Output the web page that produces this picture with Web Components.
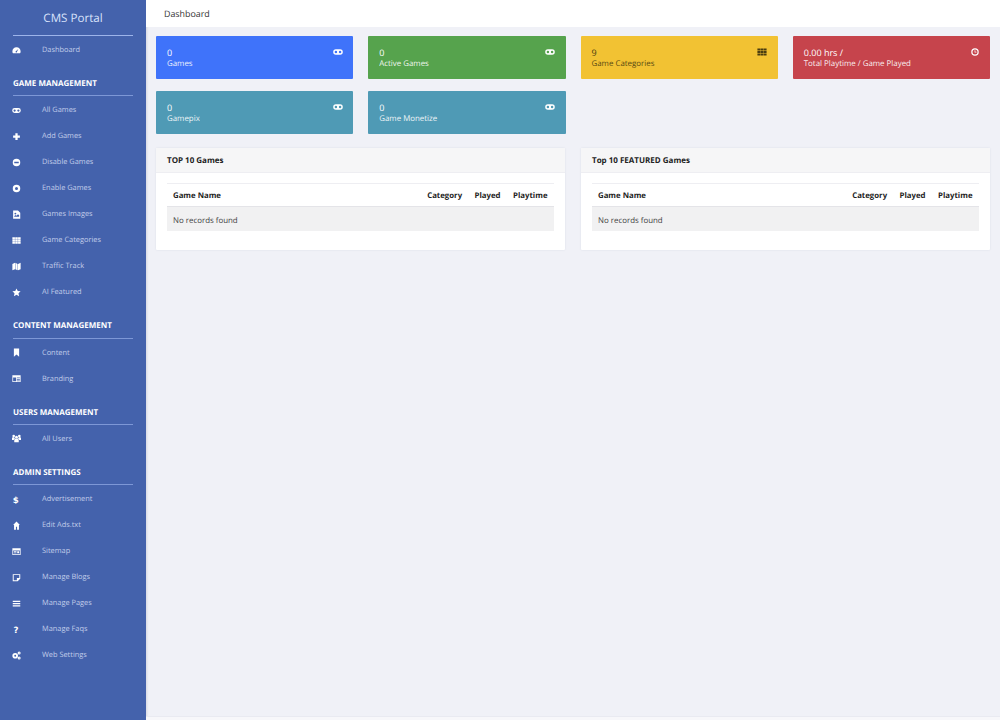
<!DOCTYPE html>
<html>
<head>
<meta charset="utf-8">
<title>CMS Portal</title>
<style>
  html, body { margin: 0; height: 100%; }
  body { font-family: "Open Sans", "Liberation Sans", sans-serif; background: #f0f1f7; text-rendering: geometricPrecision; }
  app-shell { height: 720px; }
</style>
</head>
<body>
<app-shell>
  <side-bar slot="side" brand="CMS Portal">
    <nav-item icon="dash" label="Dashboard"></nav-item>
    <nav-head label="GAME MANAGEMENT"></nav-head>
    <nav-item icon="game" label="All Games"></nav-item>
    <nav-item icon="plus" label="Add Games"></nav-item>
    <nav-item icon="minus" label="Disable Games"></nav-item>
    <nav-item icon="dot" label="Enable Games"></nav-item>
    <nav-item icon="image" label="Games Images"></nav-item>
    <nav-item icon="grid" label="Game Categories"></nav-item>
    <nav-item icon="map" label="Traffic Track"></nav-item>
    <nav-item icon="star" label="AI Featured"></nav-item>
    <nav-head label="CONTENT MANAGEMENT"></nav-head>
    <nav-item icon="bookmark" label="Content"></nav-item>
    <nav-item icon="card" label="Branding"></nav-item>
    <nav-head label="USERS MANAGEMENT"></nav-head>
    <nav-item icon="users" label="All Users"></nav-item>
    <nav-head label="ADMIN SETTINGS"></nav-head>
    <nav-item icon="dollar" label="Advertisement"></nav-item>
    <nav-item icon="home" label="Edit Ads.txt"></nav-item>
    <nav-item icon="window" label="Sitemap"></nav-item>
    <nav-item icon="note" label="Manage Blogs"></nav-item>
    <nav-item icon="bars" label="Manage Pages"></nav-item>
    <nav-item icon="question" label="Manage Faqs"></nav-item>
    <nav-item icon="cogs" label="Web Settings"></nav-item>
  </side-bar>
  <top-bar slot="top">Dashboard</top-bar>
  <stat-grid>
    <stat-card color="#3f73fa" icon="game" value="0" label="Games"></stat-card>
    <stat-card color="#56a34d" icon="game" value="0" label="Active Games"></stat-card>
    <stat-card color="#f2c233" ink="#4a3d10" icon="grid" value="9" label="Game Categories"></stat-card>
    <stat-card color="#c6444c" icon="clock" value="0.00 hrs /" label="Total Playtime / Game Played"></stat-card>
    <stat-card color="#4f9ab5" icon="game" value="0" label="Gamepix"></stat-card>
    <stat-card color="#4f9ab5" icon="game" value="0" label="Game Monetize"></stat-card>
  </stat-grid>
  <panel-row>
    <top-table heading="TOP 10 Games"></top-table>
    <top-table heading="Top 10 FEATURED Games"></top-table>
  </panel-row>
</app-shell>

<script>
'use strict';

(function() {
  // 24x24 icons, filled with currentColor
  const ICONS = {
    dash: '<path fill-rule="evenodd" d="M12 3.500C5.500 3.500 1 8.500 1 14.500c0 2 .5 3.500 1.500 5h19c1-1.500 1.500-3 1.500-5 0-6-4.500-11-11-11zm5 4.500l-3.500 6.500a2 2 0 1 1-2.500-1.300z"/>',
    game: '<path fill-rule="evenodd" d="M7 5.500h10a6.500 6.500 0 0 1 0 13H7a6.500 6.500 0 0 1 0-13zm0 3.500a3 3 0 1 0 0 6 3 3 0 0 0 0-6zm10 0a3 3 0 1 0 0 6 3 3 0 0 0 0-6z"/>',
    plus: '<path d="M9 3h6v6h6v6h-6v6H9v-6H3V9h6z"/>',
    minus: '<path fill-rule="evenodd" d="M12 2a10 10 0 1 0 0 20 10 10 0 0 0 0-20zM6 10h12v4H6z"/>',
    dot: '<path fill-rule="evenodd" d="M12 2a10 10 0 1 0 0 20 10 10 0 0 0 0-20zm0 6a4 4 0 1 1 0 8 4 4 0 0 1 0-8z"/>',
    image: '<path fill-rule="evenodd" d="M3 1h13l6 6v16H3zm3 17h13v-4l-3-3-4 4-2-2-4 3zm3-11a2.500 2.500 0 1 0 0 5 2.500 2.500 0 0 0 0-5z"/>',
    grid: '<path d="M1 3.500h6.800v5H1zm7.600 0h6.800v5H8.600zm7.600 0H23v5h-6.800zM1 9.500h6.800v5H1zm7.600 0h6.800v5H8.600zm7.600 0H23v5h-6.800zM1 15.500h6.800v5H1zm7.600 0h6.800v5H8.600zm7.600 0H23v5h-6.800z"/>',
    map: '<path d="M1 5l7-3v17l-7 3zm8-3l6 3v17l-6-3zm7 3l7-3v17l-7 3z"/>',
    star: '<path d="M12 1l3.300 7 7.700.9-5.700 5.300 1.500 7.800-6.800-3.900L5.200 22l1.500-7.800L1 8.900 8.700 8z"/>',
    bookmark: '<path d="M5 1h14v22l-7-5.500L5 23z"/>',
    card: '<path fill-rule="evenodd" d="M1 3h22v18H1zm2 6v10h8V9zm10 0v2h8V9zm0 4v2h8v-2zm0 4v2h8v-2z"/>',
    users: '<path d="M12 4.500a4 4 0 1 1 0 8 4 4 0 0 1 0-8zM4.500 2a3.500 3.500 0 1 1 0 7 3.500 3.500 0 0 1 0-7zm15 0a3.500 3.500 0 1 1 0 7 3.500 3.500 0 0 1 0-7zM6 22v-5c0-2.500 1.500-4 3-4.500 1.700 1 4.300 1 6 0 1.500.5 3 2 3 4.500v5zM0 16v-4.500C0 10 1 9 2 8.800c1.300.8 3 .8 4 .2.300 1 1 2 2 2.700C6 12.500 5 14 4.800 16zM24 16v-4.500c0-1.500-1-2.500-2-2.700-1.300.8-3 .8-4 .2-.3 1-1 2-2 2.700 2 .8 3 2.300 3.200 4.300z"/>',
    dollar: '<text x="10" y="20" font-size="23" font-weight="700" text-anchor="middle" font-family="DejaVu Sans">$</text>',
    home: '<path d="M12 1l9 9.500h-2.500V23h-5v-8h-3v8h-5V10.500H3z"/>',
    window: '<path fill-rule="evenodd" d="M1 3h22v18H1zm2 6v10h18V9zm2 2h7v2H5zm0 3.500h7v2H5zm9-3.500h5v5.500h-5z"/>',
    note: '<path fill-rule="evenodd" d="M2 3h20v12l-7 7H2zm2.500 2.500v14H13V13h6.500V5.500z"/>',
    bars: '<path d="M2 4.500h20v3.500H2zm0 6h20V14H2zm0 6h20V20H2z"/>',
    question: '<text x="11" y="21" font-size="23" font-weight="700" text-anchor="middle" font-family="DejaVu Sans">?</text>',
    cogs: '<path fill-rule="evenodd" d="M8.500 5a7.500 7.500 0 1 0 0 15 7.500 7.500 0 0 0 0-15zm0 5a2.500 2.500 0 1 1 0 5 2.500 2.500 0 0 1 0-5zM19 1.500a4 4 0 1 0 0 8 4 4 0 0 0 0-8zm0 2.800a1.200 1.200 0 1 1 0 2.400 1.200 1.200 0 0 1 0-2.400zM19 14.500a4 4 0 1 0 0 8 4 4 0 0 0 0-8zm0 2.800a1.200 1.200 0 1 1 0 2.400 1.200 1.200 0 0 1 0-2.400z"/>',
    clock: '<path fill-rule="evenodd" d="M12 3a9 9 0 1 0 0 18 9 9 0 0 0 0-18zm0 3a6 6 0 1 1 0 12 6 6 0 0 1 0-12zm-1 2v5h4.500v-1.800H12.800V8z"/>'
  }

  function icon(name, size) {
    return `<svg width="${size}" height="${size}" viewBox="0 0 24 24" fill="currentColor" aria-hidden="true">${ICONS[name] || ''}</svg>`
  }

  class BaseElement extends HTMLElement {
    constructor() {
      super()
      this.attachShadow({ mode: 'open' }).innerHTML = this.render()
    }

    attr(name, fallback) {
      return this.getAttribute(name) || fallback || ''
    }

    render() {
      return ''
    }
  }

  class AppShell extends BaseElement {
    render() {
      return `
        <style>
          :host { display: flex; align-items: stretch; overflow: hidden; }
          .main { flex: 1; min-width: 0; display: flex; flex-direction: column; }
          .body { flex: 1; padding: 9px 10px 0; display: flex; flex-direction: column; gap: 13px; }
          .foot { height: 3px; background: #f7f7fa; border-top: 1px solid #e9eaf1; }
        </style>
        <slot name="side"></slot>
        <div class="main">
          <slot name="top"></slot>
          <div class="body"><slot></slot></div>
          <div class="foot"></div>
        </div>
      `
    }
  }

  class SideBar extends BaseElement {
    render() {
      return `
        <style>
          :host { display: block; width: 146px; flex: none; background: #4462ac; box-sizing: border-box; box-shadow: 1px 0 2px rgba(60, 70, 110, .15); }
          .brand { margin: 0 13px; height: 35px; line-height: 38px; text-align: center; font-size: 11.600px; color: #d9e3fb; border-bottom: 1px solid #9db4ea; }
        </style>
        <div class="brand">${this.attr('brand')}</div>
        <slot></slot>
      `
    }
  }

  class NavItem extends BaseElement {
    render() {
      return `
        <style>
          :host { display: flex; align-items: center; height: 26px; box-sizing: border-box; padding: 2px 0 0 12px; font-size: 7.400px; color: #c2cdea; }
          .ico { width: 30px; flex: none; display: flex; color: #fff; }
        </style>
        <span class="ico">${icon(this.attr('icon'), 9)}</span>
        <span>${this.attr('label')}</span>
      `
    }
  }

  class NavHead extends BaseElement {
    render() {
      return `
        <style>
          :host { display: block; margin: 8px 13px 0; height: 26.250px; box-sizing: border-box; padding-top: 8px; line-height: 12px; font-size: 8px; font-weight: 700; color: #fff; border-bottom: 1px solid #7d97d6; }
        </style>
        ${this.attr('label')}
      `
    }
  }

  class TopBar extends BaseElement {
    render() {
      return `
        <style>
          :host { display: block; height: 27px; line-height: 28px; padding-left: 18px; background: #fff; font-size: 8.900px; color: #333; }
        </style>
        <slot></slot>
      `
    }
  }

  class StatGrid extends BaseElement {
    render() {
      return `
        <style>
          :host { display: grid; grid-template-columns: repeat(4, 1fr); column-gap: 15px; row-gap: 12px; }
        </style>
        <slot></slot>
      `
    }
  }

  class StatCard extends BaseElement {
    render() {
      return `
        <style>
          :host { display: flex; justify-content: space-between; height: 43px; box-sizing: border-box; padding: 11px 10.500px 0 11px; background: ${this.attr('color')}; color: ${this.attr('ink', '#fff')}; border-radius: 1px; }
          .val { font-size: 9px; line-height: 11px; }
          .lab { font-size: 7.900px; line-height: 13px; opacity: .9; }
          .ico { display: flex; height: 10px; }
        </style>
        <div>
          <div class="val">${this.attr('value')}</div>
          <div class="lab">${this.attr('label')}</div>
        </div>
        <span class="ico">${icon(this.attr('icon'), 10)}</span>
      `
    }
  }

  class PanelRow extends BaseElement {
    render() {
      return `
        <style>
          :host { display: grid; grid-template-columns: 408.500px 408.500px; column-gap: 16.500px; margin-top: 1px; }
        </style>
        <slot></slot>
      `
    }
  }

  class TopTable extends BaseElement {
    render() {
      return `
        <style>
          :host { display: block; height: 102px; background: #fff; box-shadow: 0 0 2px rgba(60, 70, 110, .12); border-radius: 1px; color: #222; }
          .head { height: 24px; line-height: 26px; padding-left: 11px; background: #f6f6f7; border-bottom: 1px solid #eeeef2; font-size: 8px; font-weight: 700; }
          .table { margin: 10px 11px 0; border-top: 1px solid #eeeef2; font-size: 7.800px; }
          .row { display: flex; height: 23px; align-items: center; padding: 0 6px; box-sizing: border-box; }
          .cols { font-weight: 700; border-bottom: 1px solid #e4e4e8; padding-top: 2px; }
          .cols span:first-child { flex: 1; }
          .cols span + span { margin-left: 12.500px; }
          .empty { height: 24px; padding-top: 4px; background: #f1f1f2; color: #444; font-size: 7.900px; }
        </style>
        <div class="head">${this.attr('heading')}</div>
        <div class="table">
          <div class="row cols"><span>Game Name</span><span>Category</span><span>Played</span><span>Playtime</span></div>
          <div class="row empty">No records found</div>
        </div>
      `
    }
  }

  customElements.define('app-shell', AppShell)
  customElements.define('side-bar', SideBar)
  customElements.define('nav-item', NavItem)
  customElements.define('nav-head', NavHead)
  customElements.define('top-bar', TopBar)
  customElements.define('stat-grid', StatGrid)
  customElements.define('stat-card', StatCard)
  customElements.define('panel-row', PanelRow)
  customElements.define('top-table', TopTable)
})();
</script>
</body>
</html>
